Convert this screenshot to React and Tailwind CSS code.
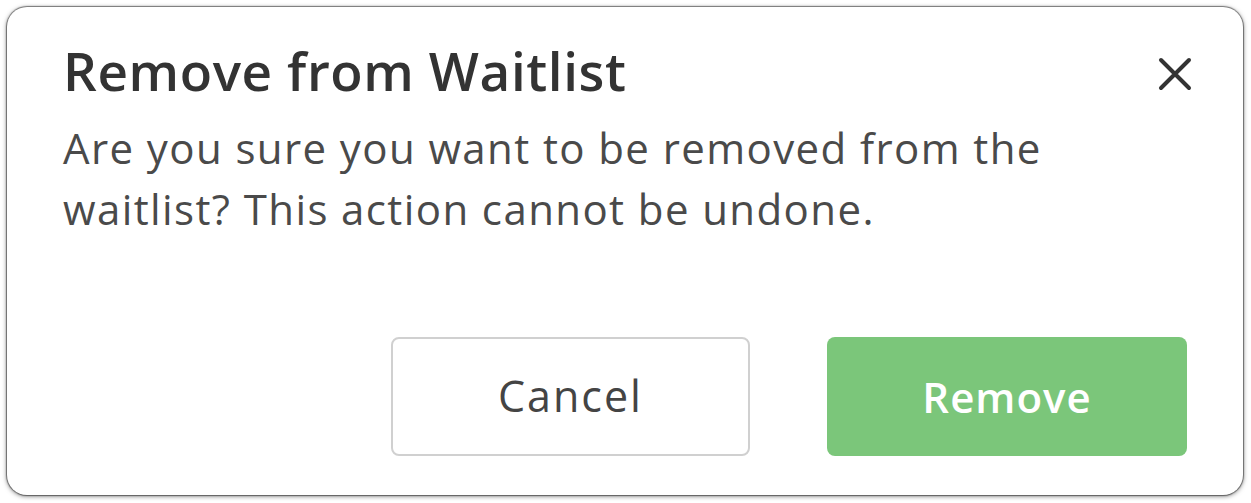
import React from "react";

export default function App() {
  return (
    <div className="w-[1251px] h-[503px] bg-white p-[7px]" style={{ fontFamily: "'Open Sans', Lato, sans-serif" }}>
      <div className="w-[1236px] h-[488px] bg-white rounded-[20px] shadow-[0_0_1px_1px_rgba(0,0,0,0.45),0_1px_5px_rgba(0,0,0,0.55)] flex flex-col px-[56px] pt-[32px] pb-[39px]">
        <div className="flex items-start justify-between">
          <h1 className="text-[53px] leading-[64px] font-semibold tracking-[0.6px] text-[#333333]">Remove from Waitlist</h1>
          <button className="mt-[18px] mr-[-5px] w-[34px] h-[34px] flex items-center justify-center text-[#333333]">
            <svg width="34" height="34" viewBox="0 0 34 34" fill="none" stroke="currentColor" strokeWidth="4" strokeLinecap="round">
              <path d="M3 3 L31 31 M31 3 L3 31" />
            </svg>
          </button>
        </div>
        <p className="mt-[14px] text-[42px] leading-[61px] tracking-[1.4px] text-[#4a4a4a] w-[1060px]">
          Are you sure you want to be removed from the waitlist? This action cannot be undone.
        </p>
        <div className="mt-auto flex justify-end gap-[77px]">
          <button className="w-[359px] h-[119px] rounded-[8px] border-2 border-[#d0d0d0] bg-white text-[43px] tracking-[2px] text-[#444444]">Cancel</button>
          <button className="w-[360px] h-[119px] rounded-[8px] bg-[#7bc67a] text-[42px] font-semibold tracking-[1px] text-white">Remove</button>
        </div>
      </div>
    </div>
  );
}
